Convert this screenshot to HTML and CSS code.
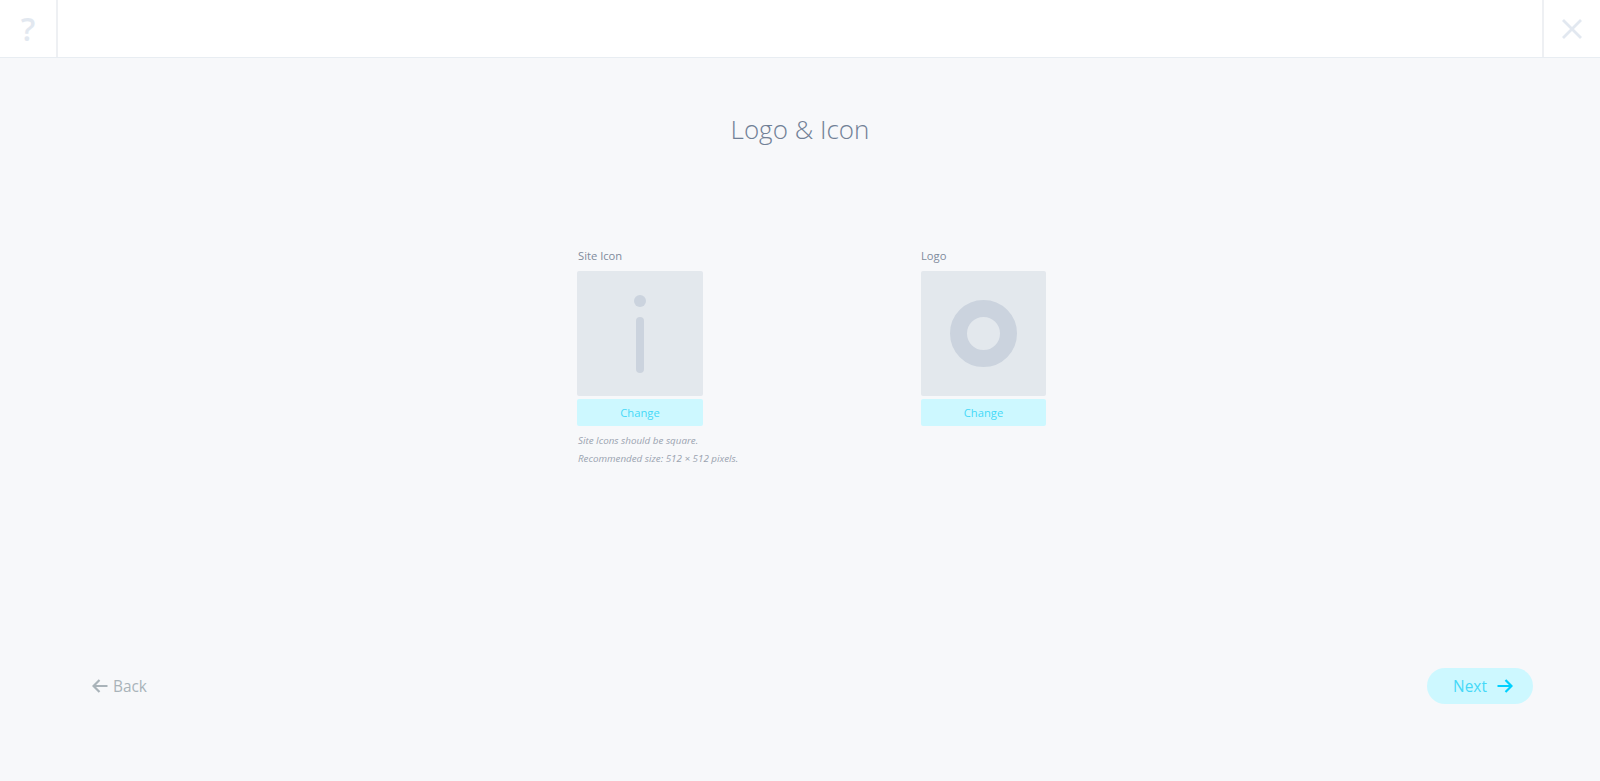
FILE: index.html
```html
<!DOCTYPE html>
<html lang="en">
<head>
    <meta charset="UTF-8">
    <title>Logo &amp; Icon</title>
    <link rel="stylesheet" href="styles.css">
</head>
<body>

    <div class="topbar">
        <div class="help">?</div>
        <div class="close">
            <svg width="22" height="22" viewBox="0 0 22 22">
                <path d="M2 2L20 20M20 2L2 20" stroke="#e2e8f0" stroke-width="2.8" fill="none"/>
            </svg>
        </div>
    </div>

    <div class="main">
        <h1>Logo &amp; Icon</h1>

        <div class="fields">
            <div class="field field-icon">
                <div class="label">Site Icon</div>
                <div class="preview">
                    <svg width="12" height="78" viewBox="0 0 12 78">
                        <circle cx="6" cy="6" r="6" fill="#cbd3de"/>
                        <rect x="2" y="22" width="8" height="56" rx="4" fill="#cbd3de"/>
                    </svg>
                </div>
                <button class="change">Change</button>
                <p class="note">Site Icons should be square.<br>Recommended size: 512 × 512 pixels.</p>
            </div>
            <div class="field">
                <div class="label">Logo</div>
                <div class="preview">
                    <svg width="67" height="67" viewBox="0 0 67 67">
                        <circle cx="33.5" cy="33.5" r="25" fill="none" stroke="#cbd3de" stroke-width="17"/>
                    </svg>
                </div>
                <button class="change">Change</button>
            </div>
        </div>

        <div class="nav">
            <button class="back">
                <svg width="16" height="14" viewBox="0 0 16 14">
                    <path d="M15.5 7H1.5M7.5 1L1.5 7L7.5 13" stroke="currentColor" stroke-width="2.2" fill="none"/>
                </svg>
                Back
            </button>
            <button class="next">
                Next
                <svg width="16" height="14" viewBox="0 0 16 14">
                    <path d="M0.5 7H14.5M8.5 1L14.5 7L8.5 13" stroke="#00d1ff" stroke-width="2.2" fill="none"/>
                </svg>
            </button>
        </div>
    </div>

</body>
</html>
```

FILE: styles.css
```css
* {
    box-sizing: border-box;
}
html, body {
    height: 100%;
}
body {
    margin: 0;
    background-color: #f7f8fa;
    font-family: 'Open Sans', 'Noto Sans', sans-serif;
    display: flex;
    flex-direction: column;
    overflow: hidden;
}
.topbar {
    height: 58px;
    flex: none;
    display: flex;
    justify-content: space-between;
    background-color: #fff;
    border-bottom: 1px solid #e8edf2;
}
.help {
    width: 58px;
    border-right: 2px solid #eef0f3;
    display: flex;
    align-items: center;
    justify-content: center;
    font-size: 32px;
    font-weight: 600;
    line-height: 1;
    color: #e2e8f0;
}
.close {
    width: 58px;
    border-left: 2px solid #eef0f3;
    display: flex;
    align-items: center;
    justify-content: center;
}
.main {
    flex: 1;
    display: flex;
    flex-direction: column;
}
h1 {
    margin: 0;
    padding-top: 52px;
    height: 129px;
    text-align: center;
    font-size: 26px;
    line-height: 38px;
    font-weight: 300;
    color: #718096;
}
.fields {
    padding: 62px 0 0 577px;
    display: flex;
    height: 481px;
}
.field {
    width: 125px;
}
.field-icon {
    width: 126px;
    margin-right: 218px;
}
.label {
    font-size: 11.2px;
    line-height: 16px;
    height: 16px;
    margin-top: -1px;
    margin-bottom: 7px;
    color: #7f8b9c;
}
.field-icon .label {
    padding-left: 1px;
}
.preview {
    width: 100%;
    height: 125px;
    background-color: #e3e8ed;
    border-radius: 2px;
    display: flex;
    align-items: center;
    justify-content: center;
}
.change {
    display: block;
    width: 100%;
    height: 27px;
    margin-top: 3px;
    padding: 0;
    border: none;
    border-radius: 2px;
    background-color: #cdf8ff;
    color: #45d8f8;
    font-family: inherit;
    font-size: 11.2px;
}
.note {
    margin: 6px 0 0;
    padding-left: 1px;
    width: 200px;
    font-size: 9.8px;
    line-height: 18px;
    font-style: italic;
    color: #9aa3b0;
}
.nav {
    display: flex;
    justify-content: space-between;
    align-items: center;
    padding: 0 67px 0 92px;
}
.nav button {
    border: none;
    font-family: inherit;
    padding: 0;
    display: flex;
    align-items: center;
}
.back {
    background: none;
    color: #a9b3b9;
    font-size: 15.4px;
    gap: 5px;
}
.nav .next {
    width: 106px;
    height: 36px;
    padding-left: 6px;
    justify-content: center;
    gap: 10px;
    border-radius: 18px;
    background-color: #cdf8ff;
    color: #45d8f8;
    font-size: 15.4px;
}
```
